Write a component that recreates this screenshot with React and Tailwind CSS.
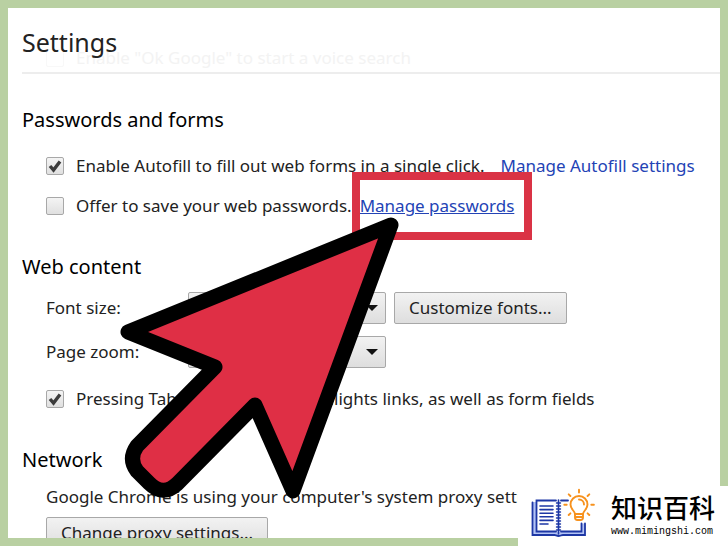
import React, { useState } from 'react';

const CheckMark = () => (
    <svg className="pointer-events-none absolute inset-0 size-[18px]" viewBox="0 0 18 18" fill="none">
        <path d="M4 9 L7.5 13 L14 4.5" stroke="#3c3c3c" strokeWidth="3.4" />
    </svg>
);

const CheckRow = ({ id, label, defaultChecked, children }) => {
    const [checked, setChecked] = useState(defaultChecked);

    return (
        <div className="flex h-6 items-center">
            <span className="relative mr-3 size-[18px] shrink-0">
                <input
                    id={id}
                    type="checkbox"
                    checked={checked}
                    onChange={(e) => setChecked(e.target.checked)}
                    className="block size-[18px] appearance-none rounded-[2px] border border-[#a8a8a8] bg-linear-to-b from-[#f4f4f4] to-[#e0e0e0]"
                />
                {checked && <CheckMark />}
            </span>
            <label htmlFor={id} className="whitespace-nowrap">{label}</label>
            {children}
        </div>
    );
};

const SelectRow = ({ id, label, options, children }) => (
    <div className="flex h-8 items-center gap-2">
        <label htmlFor={id} className="w-[134px] shrink-0 whitespace-nowrap">{label}</label>
        <div className="relative w-[198px] shrink-0">
            <select
                id={id}
                className="block h-8 w-full appearance-none rounded-[2px] border border-[#a8a8a8] bg-linear-to-b from-[#f2f2f2] to-[#dedede] px-3"
            >
                {options.map((opt) => (
                    <option key={opt}>{opt}</option>
                ))}
            </select>
            <svg className="pointer-events-none absolute top-3 right-2 h-2 w-3" viewBox="0 0 12 8">
                <path d="M0 1h12L6 7z" fill="#111" />
            </svg>
        </div>
        {children}
    </div>
);

const GreyButton = ({ children }) => (
    <button
        type="button"
        className="h-8 rounded-[2px] border border-[#a8a8a8] bg-linear-to-b from-[#f2f2f2] to-[#dedede] px-[14px] whitespace-nowrap hover:to-[#d2d2d2]"
    >
        {children}
    </button>
);

const Section = ({ title, children }) => (
    <section className="mb-[35px]">
        <h2 className="text-xl leading-7 text-black">{title}</h2>
        {children}
    </section>
);

// Big red arrow pointing at the passwords link
const Pointer = () => (
    <svg className="pointer-events-none absolute top-[216px] left-[120px] h-[292px] w-[288px]" viewBox="120 216 288 292">
        <path
            d="M391 225 L128 332 L215 367 L137 446 Q128 459 137 471 L149 483 Q163 497 177 484 L255 405 L293 491 Z"
            fill="#df2f45"
            stroke="#000"
            strokeWidth="15"
            strokeLinejoin="round"
        />
    </svg>
);

const BookLogo = () => (
    <svg className="h-[50px] w-[66px] shrink-0" viewBox="531 488 66 50" fill="none" strokeLinecap="round">
        {/* Cover */}
        <path d="M532.5 502h3.500v29.500h46v-8h3v11.500h-52.500z" fill="#b4c4f5" />
        <path d="M532.500 502.500V535H554.500C556 535 556.500 536 558.500 536S561 535 563 535H585V523.500" stroke="#1d37a5" strokeWidth="1.800" />
        {/* Pages */}
        <path d="M556 500.500H536.500V531.500H556M561 500.500H568M561 531.500H581.500V523.500" stroke="#1d37a5" strokeWidth="1.800" />
        <path d="M540 506h13M540 509.600h13M540 513.200h13M540 516.800h13M540 520.400h13M540 524h8" stroke="#1d37a5" strokeWidth="1.600" />
        {/* Spiral */}
        <path d="M558.500 500V534" stroke="#1d37a5" strokeWidth="1.600" />
        <path d="M556.500 503h4M556.500 506h4M556.500 509h4M556.500 512h4M556.500 515h4M556.500 518h4M556.500 521h4M556.500 524h4M556.500 527h4M556.500 530h4" stroke="#1d37a5" strokeWidth="1.400" />
        {/* Bulb */}
        <g stroke="#f7921e" strokeWidth="1.900">
            <path d="M575 514C575 511 570.500 509.500 570.500 504.500A8.500 8.500 0 0 1 587.500 504.500C587.500 509.500 583 511 583 514Z" fill="#fff" />
            <path d="M575 514V517.500Q575 520 577.500 520H580.500Q583 520 583 517.500V514M575 517H583" />
            <path d="M579 499.500A5 5 0 0 1 584 504.500" />
            <path d="M579 489.800V492.500M568.700 494.300L570.400 496M589.300 494.300L587.600 496M564.300 504.700H566.700M591.300 504.700H593.900M568.700 515L570.400 513.300M589.300 515L587.600 513.300" />
        </g>
    </svg>
);

const Watermark = () => (
    <div className="absolute right-0 bottom-0 flex h-[60px] w-[210px] items-start gap-[14px] bg-white pt-[2px] pl-[13px]">
        <BookLogo />
        <div className="flex flex-col gap-1 pt-1 text-black">
            <span className="font-['Noto_Sans_CJK_SC',sans-serif] text-[26px] leading-[30px] font-medium whitespace-nowrap">知识百科</span>
            <span className="font-['Liberation_Mono',monospace] text-[10px] leading-3 whitespace-nowrap">www.mimingshi.com</span>
        </div>
    </div>
);

const App = () => {
    return (
        <div className="relative h-screen overflow-hidden bg-[#b9d0a2] p-2 font-['Noto_Sans',sans-serif] text-[17px] leading-6 text-[#222]">
            <main className="h-full overflow-hidden bg-white pl-[14px]">
                <header className="relative mb-8 h-[66px] border-b-2 border-[#ededed] pt-[18px]">
                    <p className="absolute top-[38px] left-6 flex items-center gap-3 whitespace-nowrap text-[#f3f3f3]">
                        <span className="size-[18px] rounded-[2px] border border-[#f8f8f8]"></span>
                        Enable "Ok Google" to start a voice search
                    </p>
                    <h1 className="relative text-[25px] leading-8">Settings</h1>
                </header>

                <Section title="Passwords and forms">
                    <div className="flex flex-col gap-4 pt-5 pl-6">
                        <CheckRow id="autofill" label="Enable Autofill to fill out web forms in a single click." defaultChecked={true}>
                            <a href="#autofill" className="ml-4 whitespace-nowrap text-[#2343b5]">Manage Autofill settings</a>
                        </CheckRow>
                        <CheckRow id="offer-save" label="Offer to save your web passwords." defaultChecked={false}>
                            <a href="#passwords" className="relative ml-2 whitespace-nowrap text-[#2343b5] underline">
                                Manage passwords
                                <span className="absolute -inset-y-[22px] -right-[18px] -left-2 border-8 border-[#da3345]"></span>
                            </a>
                        </CheckRow>
                    </div>
                </Section>

                <Section title="Web content">
                    <div className="flex flex-col gap-3 pt-[11px] pl-6">
                        <SelectRow id="font-size" label="Font size:" options={['Medium']}>
                            <GreyButton>Customize fonts...</GreyButton>
                        </SelectRow>
                        <SelectRow id="page-zoom" label="Page zoom:" options={['100%']} />
                        <div className="pt-[7px]">
                            <CheckRow
                                id="tab-links"
                                label="Pressing Tab on a webpage highlights links, as well as form fields"
                                defaultChecked={true}
                            />
                        </div>
                    </div>
                </Section>

                <Section title="Network">
                    <div className="flex flex-col items-start gap-2 pt-[11px] pl-6">
                        <p className="whitespace-nowrap">Google Chrome is using your computer's system proxy settings</p>
                        <GreyButton>Change proxy settings...</GreyButton>
                    </div>
                </Section>
            </main>

            <Pointer />
            <Watermark />
        </div>
    );
};

export default App;
